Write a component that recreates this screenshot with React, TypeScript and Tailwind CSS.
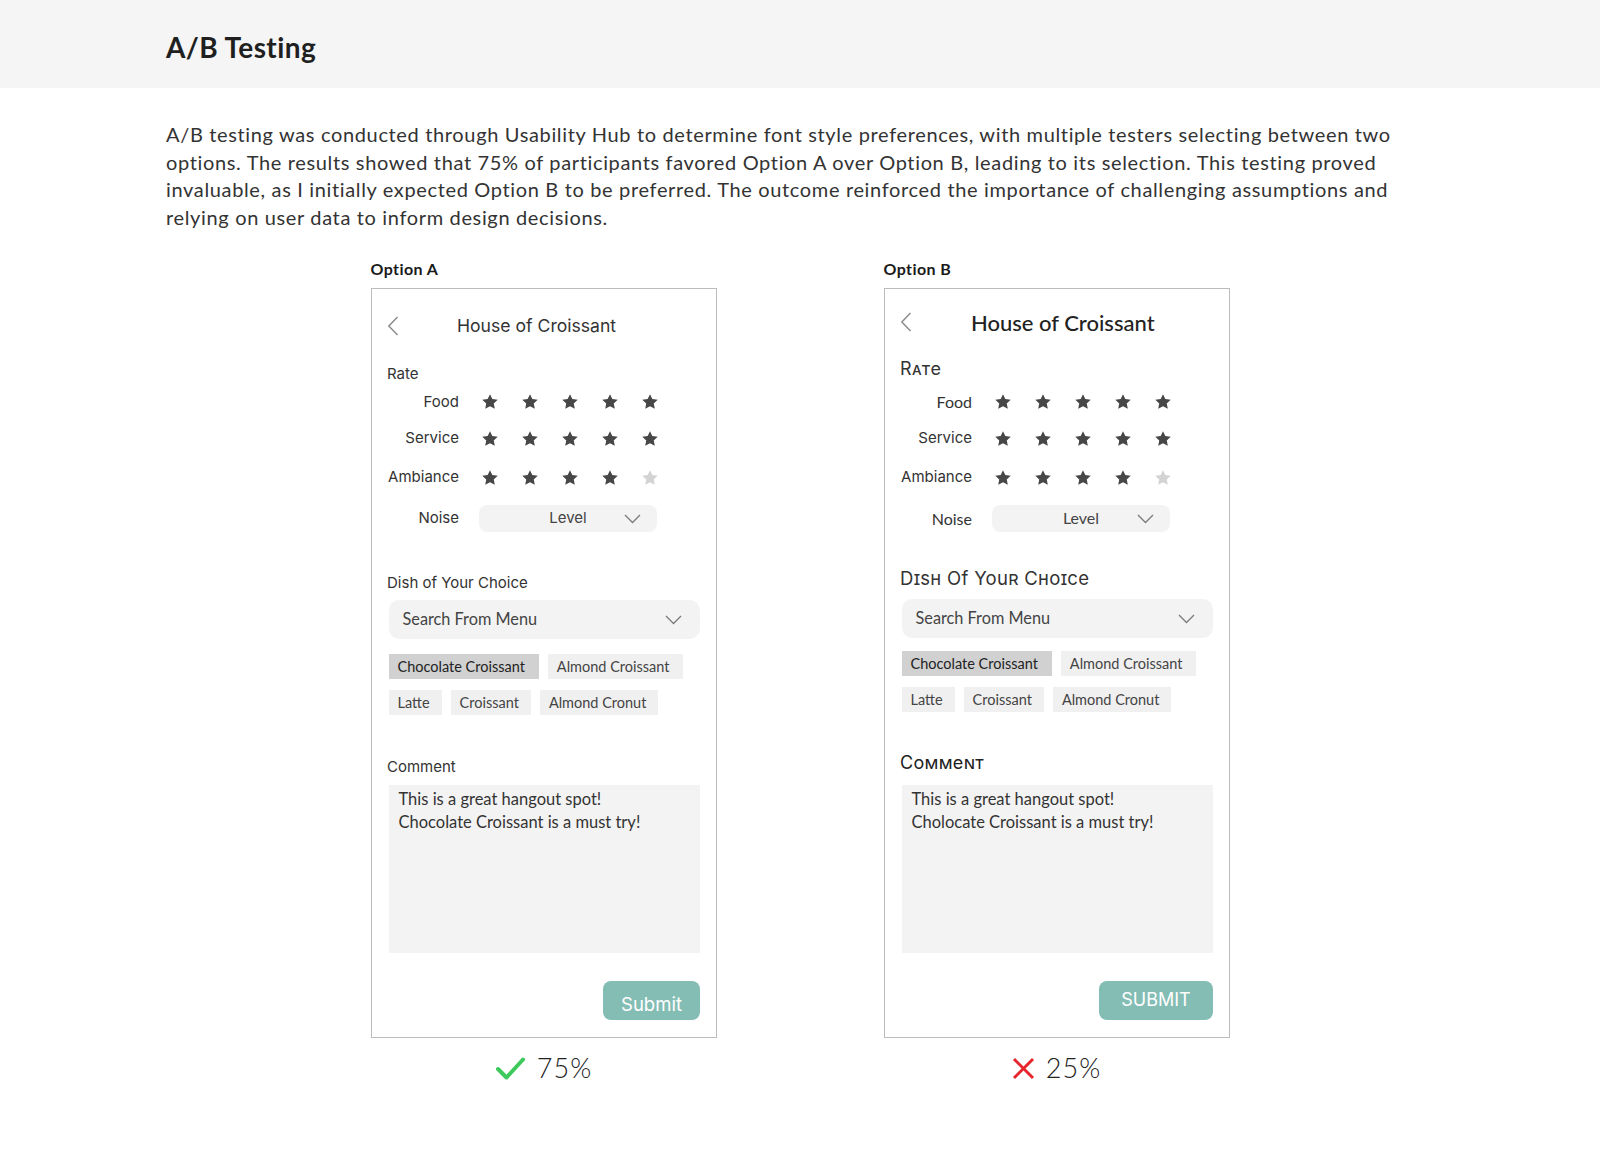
import React from "react";

const avenir = "font-['Lato',sans-serif]";
const sf = "font-['Inter',sans-serif]";

function Star({ on = true }: { on?: boolean }) {
  return (
    <svg width="18" height="18" viewBox="0 0 24 24" className="shrink-0">
      <path
        d="M12 1.5l3.1 6.6 7.2.9-5.3 4.9 1.4 7.2L12 17.6l-6.4 3.5 1.4-7.2-5.3-4.9 7.2-.9z"
        fill={on ? "#474747" : "#d3d3d3"}
      />
    </svg>
  );
}

function Chevron() {
  return (
    <svg width="17" height="10" viewBox="0 0 17 10">
      <polyline points="1,1 8.5,8.5 16,1" fill="none" stroke="#7a7a7a" strokeWidth="1.3" />
    </svg>
  );
}

function BackArrow() {
  return (
    <svg width="12" height="20" viewBox="0 0 12 20">
      <polyline points="10.5,1 1.8,10 10.5,19" fill="none" stroke="#8c8c8c" strokeWidth="1.5" />
    </svg>
  );
}

interface CardProps {
  variant: "A" | "B";
}

function RatingRow({
  label,
  count,
  height,
  labelClass,
}: {
  label: string;
  count: number;
  height: string;
  labelClass: string;
}) {
  return (
    <div className={`flex items-center ${height}`}>
      <span className={`w-[72px] text-right text-[15px] text-[#333] ${labelClass}`}>{label}</span>
      <div className="ml-[22px] flex gap-[22px]">
        {[0, 1, 2, 3, 4].map((i) => (
          <Star key={i} on={i < count} />
        ))}
      </div>
    </div>
  );
}

function PhoneCard({ variant }: CardProps) {
  const b = variant === "B";
  const caps = "[font-variant:small-caps]";
  const chips = [
    ["Chocolate Croissant", "Almond Croissant"],
    ["Latte", "Croissant", "Almond Cronut"],
  ];

  return (
    <div className="w-[346px] h-[750px] border-[1.5px] border-[#bcbcbc] bg-white flex flex-col px-[15.5px]">
      {/* nav bar */}
      <div className={`flex items-center h-[26px] ${b ? "mt-[20px]" : "mt-[24px]"}`}>
        <BackArrow />
        {b ? (
          <span className={`${avenir} ml-[59px] text-[22px] font-medium text-[#222]`}>House of Croissant</span>
        ) : (
          <span className={`${sf} ml-[58px] text-[17.6px] text-[#333]`}>House of Croissant</span>
        )}
      </div>

      {b ? (
        <div className={`${sf} ${caps} mt-[24px] mb-[5px] h-[20px] leading-[20px] text-[18px] text-[#333] tracking-[0.5px]`}>Rate</div>
      ) : (
        <div className={`${sf} mt-[25px] h-[20px] leading-[20px] text-[15px] text-[#333]`}>Rate</div>
      )}

      <RatingRow label="Food" count={5} height="h-[36px]" labelClass={b ? avenir + " text-[16px]" : sf} />
      <RatingRow label="Service" count={5} height="h-[37px]" labelClass={sf} />
      <RatingRow label="Ambiance" count={4} height="h-[41px]" labelClass={sf} />

      <div className="flex items-center mt-[7px] h-[27px]">
        <span className={`w-[72px] text-right text-[15px] text-[#333] ${b ? avenir + " text-[16px]" : sf}`}>Noise</span>
        <div className="ml-[20px] relative w-[178px] h-[27px] rounded-[8px] bg-[#f3f3f3] flex items-center justify-center">
          <span className={`${b ? avenir + " -mt-[2px] text-[16px]" : sf + " text-[15px]"} text-[#444]`}>Level</span>
          <div className="absolute right-[16px] top-[9px]">
            <Chevron />
          </div>
        </div>
      </div>

      {b ? (
        <div className={`${sf} ${caps} mt-[36px] h-[20px] leading-[20px] text-[18.5px] text-[#333] tracking-[0.3px]`}>Dish Of Your Choice</div>
      ) : (
        <div className={`${sf} mt-[41px] h-[20px] leading-[20px] text-[15px] text-[#333]`}>Dish of Your Choice</div>
      )}

      <div className={`${b ? "mt-[11px]" : "mt-[7px]"} ml-[1.5px] h-[39px] rounded-[10px] bg-[#f3f3f3] flex items-center justify-between pl-[14px] pr-[18px]`}>
        <span className={`${avenir} text-[16.3px] text-[#444]`}>Search From Menu</span>
        <Chevron />
      </div>

      <div className={`ml-[1.5px] flex flex-col gap-[11px] ${b ? "mt-[13px]" : "mt-[15px]"}`}>
        {chips.map((row, r) => (
          <div key={r} className="flex gap-[9px]">
            {row.map((c) => (
              <span
                key={c}
                className={`${avenir} h-[25px] pl-[9px] ${r === 0 ? "pr-[14px]" : "pr-[12px]"} flex items-center text-[14.5px] ${
                  c === "Chocolate Croissant" ? "bg-[#d1d1d1] text-[#222]" : "bg-[#f0f0f0] text-[#444]"
                }`}
              >
                {c}
              </span>
            ))}
          </div>
        ))}
      </div>

      {b ? (
        <div className={`${sf} ${caps} mt-[41px] h-[20px] leading-[20px] text-[18px] text-[#222] tracking-[0.3px]`}>Comment</div>
      ) : (
        <div className={`${sf} mt-[42px] h-[20px] leading-[20px] text-[15px] text-[#333]`}>Comment</div>
      )}

      <div className={`ml-[1.5px] ${b ? "mt-[12px]" : "mt-[8px]"} h-[168px] bg-[#f3f3f3] px-[10px] pt-[3px] ${avenir} text-[16.5px] leading-[22.5px] text-[#333]`}>
        <p>This is a great hangout spot!</p>
        <p>{b ? "Cholocate Croissant is a must try!" : "Chocolate Croissant is a must try!"}</p>
      </div>

      <div className="flex justify-end mt-[28px]">
        <button
          className={`${sf} h-[39px] rounded-[8px] bg-[#84bdb4] text-white ${
            b ? "w-[114px] text-[18px] pb-[3px]" : "w-[97px] text-[18.5px] pt-[8px]"
          }`}
        >
          {b ? "SUBMIT" : "Submit"}
        </button>
      </div>
    </div>
  );
}

function Result({ win, value }: { win: boolean; value: string }) {
  return (
    <div className="mt-[14px] h-[32px] flex items-center justify-center gap-[11px]">
      {win ? (
        <svg width="31" height="25" viewBox="0 0 31 25">
          <polyline points="3,13 11.5,21.5 28,3.5" fill="none" stroke="#3ec95c" strokeWidth="4" strokeLinecap="round" strokeLinejoin="round" />
        </svg>
      ) : (
        <svg width="23" height="23" viewBox="0 0 23 23">
          <line x1="2" y1="2" x2="21" y2="21" stroke="#e6262c" strokeWidth="3" />
          <line x1="21" y1="2" x2="2" y2="21" stroke="#e6262c" strokeWidth="3" />
        </svg>
      )}
      <span className={`${avenir} font-light text-[27px] text-[#222] tracking-[1px]`}>{value}</span>
    </div>
  );
}

export default function App() {
  return (
    <div className="w-[1600px] min-h-[1172px] bg-white">
      <header className="h-[88px] bg-[#f5f5f5] flex items-center px-[166px] pt-[6px]">
        <h1 className={`${avenir} text-[28px] font-bold tracking-[0.4px] text-[#1f1f1f]`}>A/B Testing</h1>
      </header>

      <p className={`${avenir} mx-[166px] mt-[33px] max-w-[1268px] text-[20px] leading-[27.5px] tracking-[0.65px] text-[#333]`}>
        A/B testing was conducted through Usability Hub to determine font style preferences, with multiple testers
        selecting between two options. The results showed that 75% of participants favored Option A over Option B,
        leading to its selection. This testing proved invaluable, as I initially expected Option B to be preferred.
        The outcome reinforced the importance of challenging assumptions and relying on user data to inform design
        decisions.
      </p>

      <div className="mt-[29px] flex justify-center gap-[167px]">
        {(["A", "B"] as const).map((v) => (
          <div key={v} className="flex flex-col">
            <div className={`${avenir} h-[18px] leading-[18px] mb-[10px] text-[16px] font-bold tracking-[0.4px] text-[#1a1a1a]`}>
              Option {v}
            </div>
            <PhoneCard variant={v} />
            <Result win={v === "A"} value={v === "A" ? "75%" : "25%"} />
          </div>
        ))}
      </div>
    </div>
  );
}
